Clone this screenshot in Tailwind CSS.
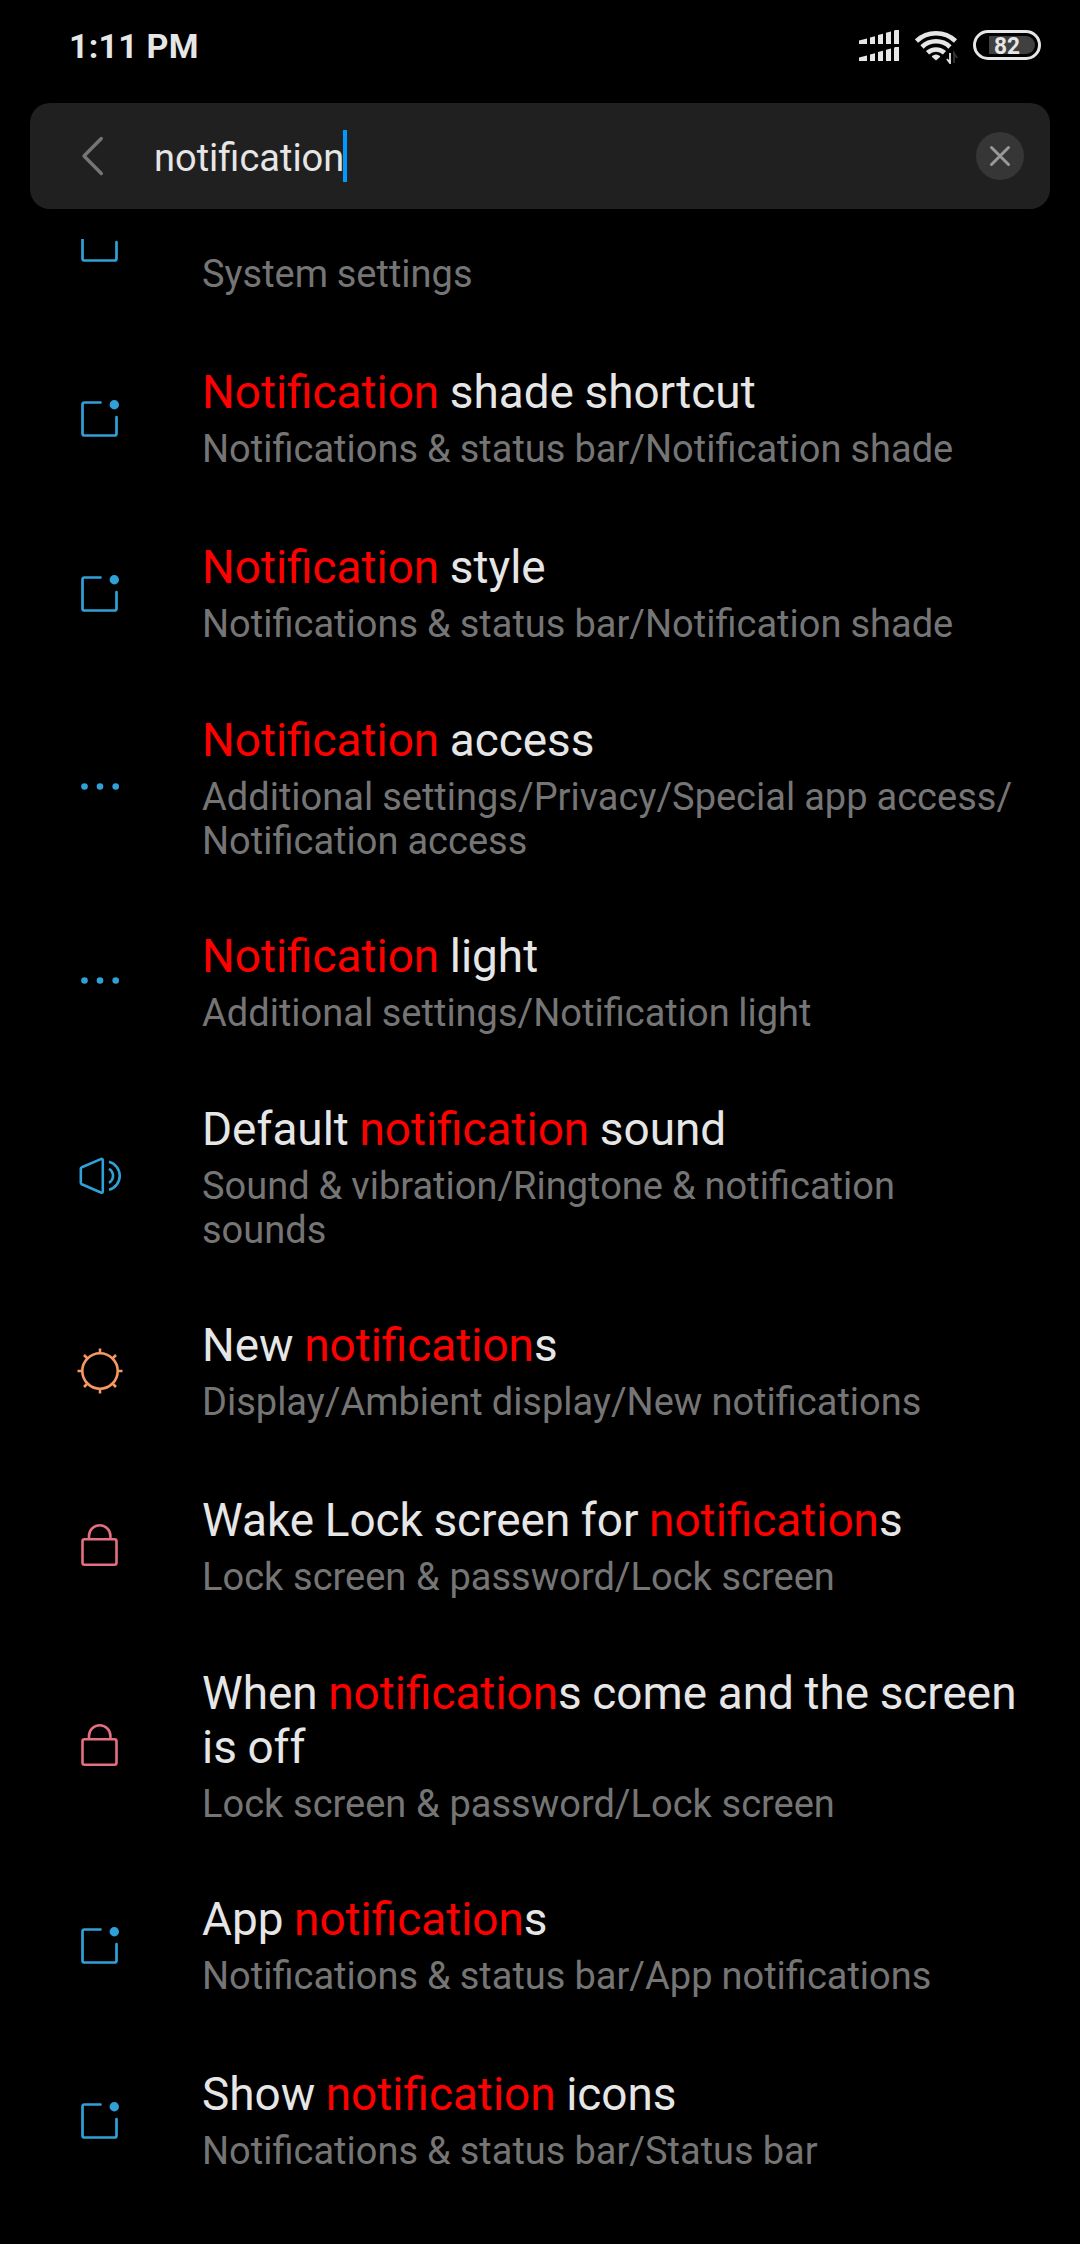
<!DOCTYPE html>
<html lang="en">
<head>
    <meta charset="UTF-8">
    <meta name="viewport" content="width=device-width, initial-scale=1.0">
    <title>Settings - Search</title>
    <script src="https://cdn.jsdelivr.net/npm/@tailwindcss/browser@4"></script>
</head>
<body class="bg-black">
    <!-- Shared icons -->
    <svg class="hidden">
        <symbol id="icon-notification" viewBox="0 0 48 48">
            <path d="M24.5 8.500H8.500a2 2 0 0 0-2 2V39.500a2 2 0 0 0 2 2H38.500a2 2 0 0 0 2-2V23.200" fill="none" stroke="currentColor" stroke-width="2.700" stroke-linecap="round"/>
            <circle cx="38.300" cy="10.700" r="4.700" fill="currentColor"/>
        </symbol>
        <symbol id="icon-more" viewBox="0 0 48 48">
            <g fill="currentColor"><circle cx="8.500" cy="22.500" r="3.300"/><circle cx="24" cy="22.500" r="3.300"/><circle cx="39.700" cy="22.500" r="3.300"/></g>
        </symbol>
        <symbol id="icon-sound" viewBox="0 0 48 48">
            <g transform="translate(0 -1.200)" fill="none" stroke="currentColor" stroke-width="2.600" stroke-linejoin="round">
                <path d="M26.800 8.500v31q0 2-2 1.200L5.800 32.500q-1-.5-1-1.500V17q0-1 1-1.500L24.800 7.300q2-.8 2 1.200z"/>
                <path d="M33 10a14.500 14.500 0 0 1 0 28M33 17a8.100 8.100 0 0 1 0 14" stroke-linecap="butt"/>
            </g>
        </symbol>
        <symbol id="icon-sun" viewBox="0 0 48 48">
            <g fill="none" stroke="currentColor" stroke-width="2.600">
                <circle cx="24" cy="24" r="17.700"/>
                <path d="M24 6V1.500M24 42v4.500M6 24H1.500M42 24h4.500M11.500 11.500 8 8M36.500 11.500 40 8M11.500 36.500 8 40M36.500 36.500 40 40"/>
            </g>
        </symbol>
        <symbol id="icon-lock" viewBox="0 0 48 48">
            <g fill="none" stroke="currentColor" stroke-width="2.600">
                <rect x="6.500" y="17.300" width="34" height="25.500" rx="2"/>
                <path d="M13 17v-3a10.700 10.700 0 0 1 21.400 0v3"/>
            </g>
        </symbol>
    </svg>

    <div class="w-[1080px] h-[2244px] overflow-hidden bg-black text-[#e6e6e6] font-[Roboto,sans-serif]">
        <!-- Status bar -->
        <div class="h-[103px] flex items-start justify-between pl-[69px] pr-[39px]">
            <div class="pt-[26px] text-[34px] leading-[40px] font-bold tracking-[0.2px]">1:11 PM</div>
            <div class="flex pt-[30px]">
                <svg class="w-[40px] h-[32px] mr-[16px]" viewBox="0 0 40 32" fill="#e6e6e6">
                    <path d="M0 10.500 8 8.500V14H0zM11 7.500l5-1.200V14h-5zM19 5l5-1.200V14h-5zM27 2.800l5-1.300V14h-5zM35 1l1-1h4v14h-5z"/>
                    <path d="M0 27.500 8 25.500V31H0zM11 24.500l5-1.200V31h-5zM19 22l5-1.200V31h-5zM27 19.800l5-1.300V31h-5zM35 18l1-1h4v14h-5z"/>
                </svg>
                <svg class="w-[44px] h-[34px] mr-[14px]" viewBox="0 0 44 34" fill="none">
                    <g stroke="#e6e6e6" stroke-width="4.600">
                        <path d="M1.500 11a28.500 28.500 0 0 1 39 0M7 17a20 20 0 0 1 28 0M12.500 22.800a12.500 12.500 0 0 1 17 0"/>
                    </g>
                    <path d="M17 26q4-3 8 0v1l-4 3.500-4-3.500z" fill="#e6e6e6"/>
                    <path d="M35 23v10l-3-4" stroke="#e6e6e6" stroke-width="1.800"/>
                    <path d="M39 33V23l3 5" stroke="#333" stroke-width="1.800"/>
                </svg>
                <svg class="w-[68px] h-[30px]" viewBox="0 0 68 30">
                    <path d="M16 6h37a9 9 0 0 1 0 18H16z" fill="#404040"/>
                    <rect x="1.500" y="1.500" width="65" height="27" rx="13.500" fill="none" stroke="#e6e6e6" stroke-width="3"/>
                    <text x="21" y="23.500" font-size="24" font-weight="700" textLength="26" lengthAdjust="spacingAndGlyphs" fill="#e6e6e6">82</text>
                </svg>
            </div>
        </div>

        <!-- Search box -->
        <div class="mx-[30px] h-[106px] rounded-[20px] bg-[#202020] flex items-center pl-[50px] pr-[26px]">
            <svg class="w-[24px] h-[42px]" viewBox="0 0 24 42" fill="none" stroke="#757575" stroke-width="3.400" stroke-linecap="round" stroke-linejoin="round">
                <path d="M21.300 3.500 4 21l17.300 17.500"/>
            </svg>
            <div class="ml-[50px] w-[189px] text-[38px] leading-[52px] pt-[4px]">notification</div>
            <div class="w-[4px] h-[52px] bg-[#0099ff]"></div>
            <div class="ml-auto w-[48px] h-[48px] rounded-full bg-[#363636] flex items-center justify-center">
                <svg class="w-[24px] h-[24px]" viewBox="0 0 24 24" fill="none" stroke="#999" stroke-width="3" stroke-linecap="round">
                    <path d="m3.500 3.500 17 17m0-17-17 17"/>
                </svg>
            </div>
        </div>

        <!-- Results -->
        <div class="mt-[30px] h-[2005px] overflow-hidden">
            <div class="-mt-[83.5px] text-[45.9px] leading-[54px] [word-spacing:-0.8px]">
                <div class="min-h-[175px] py-8 pl-[76px] flex items-center">
                    <svg class="w-12 h-12 mr-[78px] text-[#30a0d8]"><use href="#icon-notification"/></svg>
                    <div class="pt-[62px]">
                        <p class="text-[38px] leading-[44px] text-[#757575]">System settings</p>
                    </div>
                </div>
                <div class="min-h-[175px] py-8 pl-[76px] flex items-center">
                    <svg class="w-12 h-12 mr-[78px] text-[#30a0d8]"><use href="#icon-notification"/></svg>
                    <div>
                        <h2><span class="text-[#ff0000]">Notification</span> shade shortcut</h2>
                        <p class="mt-2 text-[38px] leading-[44px] text-[#757575] [word-spacing:-0.4px]">Notifications &amp; status bar/Notification shade</p>
                    </div>
                </div>
                <div class="min-h-[175px] py-8 pl-[76px] flex items-center">
                    <svg class="w-12 h-12 mr-[78px] text-[#30a0d8]"><use href="#icon-notification"/></svg>
                    <div>
                        <h2><span class="text-[#ff0000]">Notification</span> style</h2>
                        <p class="mt-2 text-[38px] leading-[44px] text-[#757575] [word-spacing:-0.4px]">Notifications &amp; status bar/Notification shade</p>
                    </div>
                </div>
                <div class="min-h-[175px] py-8 pl-[76px] flex items-center">
                    <svg class="w-12 h-12 mr-[78px] text-[#30a0d8]"><use href="#icon-more"/></svg>
                    <div>
                        <h2><span class="text-[#ff0000]">Notification</span> access</h2>
                        <p class="mt-2 text-[38px] leading-[44px] text-[#757575] [word-spacing:-0.4px]">Additional settings/Privacy/Special app access/<br>Notification access</p>
                    </div>
                </div>
                <div class="min-h-[175px] py-8 pl-[76px] flex items-center">
                    <svg class="w-12 h-12 mr-[78px] text-[#30a0d8]"><use href="#icon-more"/></svg>
                    <div>
                        <h2><span class="text-[#ff0000]">Notification</span> light</h2>
                        <p class="mt-2 text-[38px] leading-[44px] text-[#757575]">Additional settings/Notification light</p>
                    </div>
                </div>
                <div class="min-h-[175px] py-8 pl-[76px] flex items-center">
                    <svg class="w-12 h-12 mr-[78px] text-[#30a0d8]"><use href="#icon-sound"/></svg>
                    <div>
                        <h2>Default <span class="text-[#ff0000]">notification</span> sound</h2>
                        <p class="mt-2 text-[38px] leading-[44px] text-[#757575] [word-spacing:-0.4px]">Sound &amp; vibration/Ringtone &amp; notification<br>sounds</p>
                    </div>
                </div>
                <div class="min-h-[175px] py-8 pl-[76px] flex items-center">
                    <svg class="w-12 h-12 mr-[78px] text-[#f79862]"><use href="#icon-sun"/></svg>
                    <div>
                        <h2>New <span class="text-[#ff0000]">notification</span>s</h2>
                        <p class="mt-2 text-[38px] leading-[44px] text-[#757575] [word-spacing:-0.4px]">Display/Ambient display/New notifications</p>
                    </div>
                </div>
                <div class="min-h-[175px] py-8 pl-[76px] flex items-center">
                    <svg class="w-12 h-12 mr-[78px] text-[#e56e80]"><use href="#icon-lock"/></svg>
                    <div>
                        <h2>Wake Lock screen for <span class="text-[#ff0000]">notification</span>s</h2>
                        <p class="mt-2 text-[38px] leading-[44px] text-[#757575] [word-spacing:0.3px]">Lock screen &amp; password/Lock screen</p>
                    </div>
                </div>
                <div class="min-h-[175px] py-8 pl-[76px] flex items-center">
                    <svg class="w-12 h-12 mr-[78px] text-[#e56e80]"><use href="#icon-lock"/></svg>
                    <div>
                        <h2>When <span class="text-[#ff0000]">notification</span>s come and the screen<br>is off</h2>
                        <p class="mt-2 text-[38px] leading-[44px] text-[#757575] [word-spacing:0.3px]">Lock screen &amp; password/Lock screen</p>
                    </div>
                </div>
                <div class="min-h-[175px] py-8 pl-[76px] flex items-center">
                    <svg class="w-12 h-12 mr-[78px] text-[#30a0d8]"><use href="#icon-notification"/></svg>
                    <div>
                        <h2>App <span class="text-[#ff0000]">notification</span>s</h2>
                        <p class="mt-2 text-[38px] leading-[44px] text-[#757575] [word-spacing:-0.4px]">Notifications &amp; status bar/App notifications</p>
                    </div>
                </div>
                <div class="min-h-[175px] py-8 pl-[76px] flex items-center">
                    <svg class="w-12 h-12 mr-[78px] text-[#30a0d8]"><use href="#icon-notification"/></svg>
                    <div>
                        <h2>Show <span class="text-[#ff0000]">notification</span> icons</h2>
                        <p class="mt-2 text-[38px] leading-[44px] text-[#757575] [word-spacing:-0.4px]">Notifications &amp; status bar/Status bar</p>
                    </div>
                </div>
            </div>
        </div>
    </div>
</body>
</html>
